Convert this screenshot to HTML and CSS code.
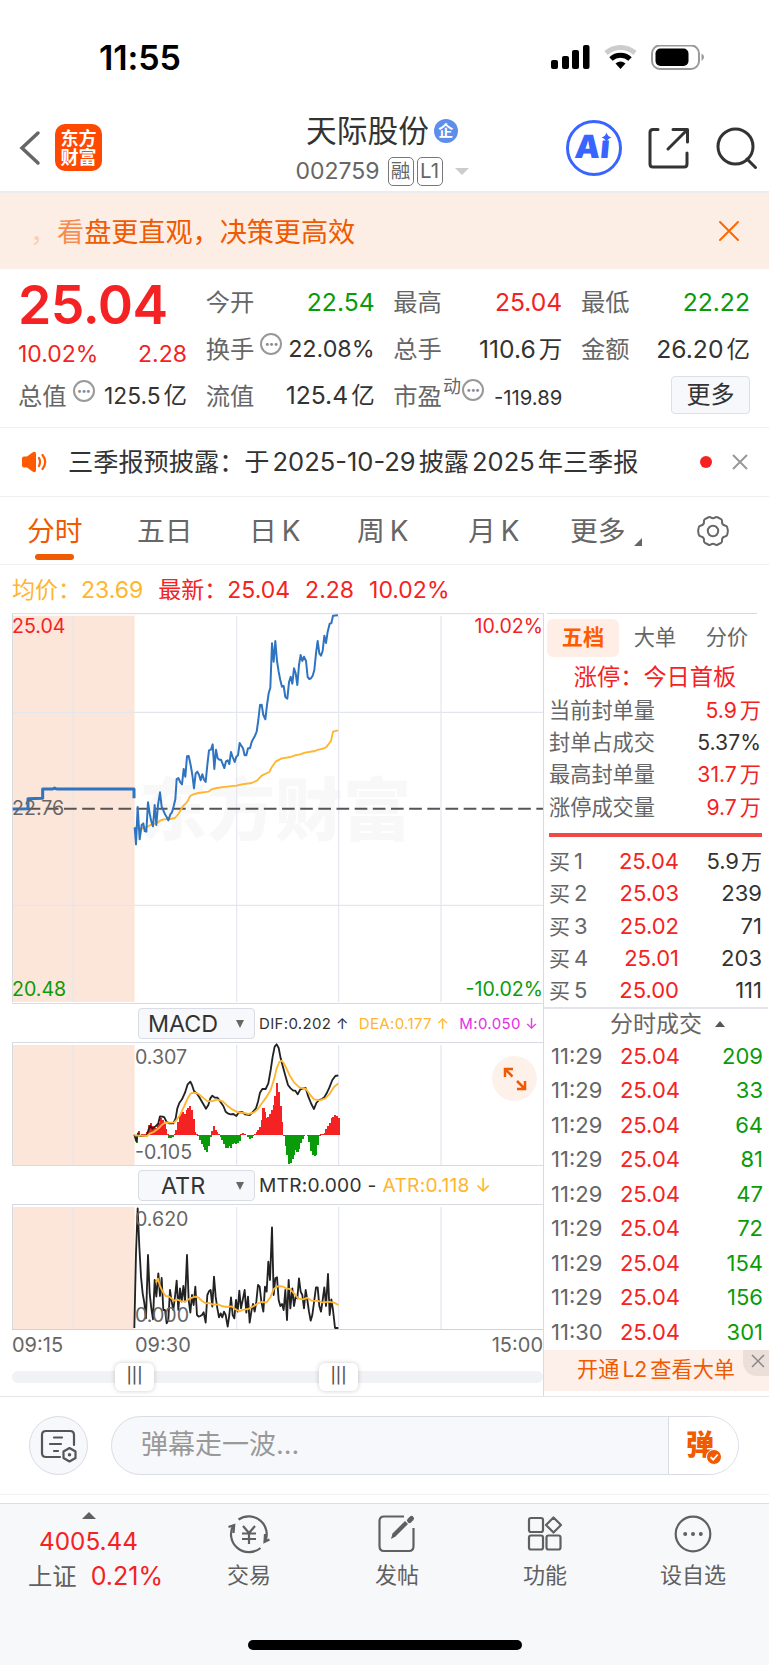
FILE: index.html
```html
<!DOCTYPE html>
<html lang="zh-CN">
<head>
    <meta charset="UTF-8">
    <meta name="viewport" content="width=device-width, initial-scale=1.0">
    <title>天际股份 002759</title>
    <link rel="stylesheet" href="styles.css">
</head>
<body>
    <div class="status-bar">
        <span class="clock">11:55</span>
        <svg class="status-icons" width="154" height="26" viewBox="0 0 154 26">
            <rect x="0" y="15" width="7" height="9" rx="2"/>
            <rect x="11" y="11" width="7" height="13" rx="2"/>
            <rect x="21" y="5" width="7" height="19" rx="2"/>
            <rect x="32" y="0" width="6.500" height="24" rx="2"/>
            <path d="M55 8 A22 22 0 0 1 84 8" fill="none" stroke="#ccc" stroke-width="5"/>
            <path d="M60 14 A14 14 0 0 1 79 14" fill="none" stroke="#000" stroke-width="5"/>
            <path d="M69.500 24 L64.500 18.500 A8 8 0 0 1 74.500 18.500 Z"/>
            <rect x="101" y="0.500" width="47" height="23.500" rx="8" fill="none" stroke="#999" stroke-width="2"/>
            <rect x="104.500" y="3.500" width="33" height="17.500" rx="5"/>
            <path d="M150.500 8.500 Q153 9.500 153 12 T150.500 16 Z" fill="#999"/>
        </svg>
    </div>

    <header class="header">
        <svg class="back" width="22" height="36" viewBox="0 0 22 36"><path d="M19 3 L3 18 L19 33" fill="none" stroke="#666" stroke-width="3.500" stroke-linecap="round"/></svg>
        <div class="logo"><span>东方</span><span>财富</span></div>
        <div class="stock">
            <div class="stock-name">天际股份<span class="ent">企</span></div>
            <div class="stock-code">002759<span class="tag">融</span><span class="tag">L1</span><i class="caret"></i></div>
        </div>
        <div class="ai">
            <svg width="58" height="58" viewBox="0 0 58 58">
                <circle cx="29" cy="29" r="26.500" fill="none" stroke="#3865ff" stroke-width="3"/>
                <path d="M41.500 13.500 Q42.500 17.500 46.500 18.500 Q42.500 19.500 41.500 23.500 Q40.500 19.500 36.500 18.500 Q40.500 17.500 41.500 13.500Z" fill="#3865ff"/>
            </svg>
            <span>Aı</span>
        </div>
        <svg class="share" width="44" height="44" viewBox="0 0 44 44" fill="none" stroke="#333" stroke-width="3" stroke-linecap="round" stroke-linejoin="round">
            <path d="M11 3.500 H6 Q3 3.500 3 6.500 V38 Q3 41 6 41 H37 Q40 41 40 38 V27"/>
            <path d="M21 23 L40 4 M26 3.500 H40.500 V16"/>
        </svg>
        <svg class="search" width="44" height="44" viewBox="0 0 44 44" fill="none" stroke="#333" stroke-width="3" stroke-linecap="round">
            <circle cx="20.500" cy="20.500" r="17.500"/><path d="M32 33 L40.500 41.500"/>
        </svg>
    </header>

    <div class="banner">
        <div class="banner-text"><span class="f1">，</span><span class="f2">看</span>盘更直观，决策更高效</div>
        <svg width="22" height="22" viewBox="0 0 22 22"><path d="M2 2 L20 20 M20 2 L2 20" stroke="#f60" stroke-width="2" stroke-linecap="round"/></svg>
    </div>

    <section class="quote">
        <div class="col first">
            <div class="price">25.04</div>
            <div class="row change red"><span>10.02%</span><span>2.28</span></div>
            <div class="row"><label>总值</label><i class="dots">•••</i><b class="mid">125.5<u>亿</u></b></div>
        </div>
        <div class="col">
            <div class="row"><label>今开</label><b class="green">22.54</b></div>
            <div class="row"><label>换手</label><i class="dots">•••</i><b class="pct">22.08%</b></div>
            <div class="row"><label>流值</label><b>125.4<u>亿</u></b></div>
        </div>
        <div class="col">
            <div class="row"><label>最高</label><b class="red">25.04</b></div>
            <div class="row"><label>总手</label><b>110.6<u>万</u></b></div>
            <div class="row"><label>市盈</label><sup>动</sup><i class="dots">•••</i><b class="small">-119.89</b></div>
        </div>
        <div class="col">
            <div class="row"><label>最低</label><b class="green">22.22</b></div>
            <div class="row"><label>金额</label><b>26.20<u>亿</u></b></div>
            <div class="row end"><button class="more">更多</button></div>
        </div>
    </section>

    <div class="notice">
        <svg width="28" height="22" viewBox="0 0 28 22">
            <path d="M3 5.500 H6 L11.500 1.500 Q15 -0.500 15 3 V19 Q15 22.500 11.500 20.500 L6 16.500 H3 Q1 16.500 1 14.500 V7.500 Q1 5.500 3 5.500Z" fill="#ff5a00"/>
            <path d="M18 7 Q20 11 18 15 M21.500 4 Q27 11 21.500 18" fill="none" stroke="#ff5a00" stroke-width="2.200" stroke-linecap="round"/>
        </svg>
        <span class="notice-text">三季报预披露：于<em>2025-10-29</em>披露<em>2025</em>年三季报</span>
        <i class="dot"></i>
        <svg width="16" height="16" viewBox="0 0 16 16"><path d="M1 1 L15 15 M15 1 L1 15" stroke="#999" stroke-width="2"/></svg>
    </div>

    <nav class="tabs">
        <span class="active">分时</span>
        <span>五日</span>
        <span>日<em>K</em></span>
        <span>周<em>K</em></span>
        <span>月<em>K</em></span>
        <span class="tab-more">更多</span>
        <svg width="34" height="32" viewBox="0 0 34 32" fill="none" stroke="#666" stroke-width="2">
            <path d="M12 2.500 Q14 1.500 15 2.700 Q17 4 19 2.700 Q20 1.500 22 2.500 L25 4 Q26.500 5 26 7 Q26 10 29 10.500 Q31 11 31.300 12.500 Q32.500 16 31.300 19.500 Q31 21 29 21.500 Q26 22 26 25 Q26.500 27 25 28 L22 29.500 Q20 30.500 19 29.300 Q17 28 15 29.300 Q14 30.500 12 29.500 L9 28 Q7.500 27 8 25 Q8 22 5 21.500 Q3 21 2.700 19.500 Q1.500 16 2.700 12.500 Q3 11 5 10.500 Q8 10 8 7 Q7.500 5 9 4 Z"/>
            <circle cx="17" cy="16" r="5.200"/>
        </svg>
    </nav>

    <div class="main">
        <div class="legend"><span class="orange">均价：23.69</span><span class="red">最新：25.04</span><span class="red">2.28</span><span class="red">10.02%</span></div>

        <div class="charts">
            <div class="price-chart">
                <span class="watermark">东方财富</span>
                <svg width="531" height="391" viewBox="36 24 1593 1173">
                    <rect x="38" y="32" width="366" height="1159" fill="#fce6da"/>
                    <path class="grid" d="M219 32 V1191 M710 32 V1191 M1016 32 V1191 M1323 32 V1191 M36 322 H1629 M36 901 H1629"/>
                    <path class="frame" d="M36 26 H1629 M37.500 26 V1191 M36 1195.500 H1629"/>
                    <path d="M83 611 H1629" stroke="#555" stroke-width="6" stroke-dasharray="38 16.500"/>
                    <polyline class="avg" points="404,667 420,672 440,666 455,658 470,655 480,647 490,643 510,642 525,639 535,627 548,605 562,590 570,574 580,568 595,564 625,560 635,553 650,549 680,545 710,542 725,538 755,534 772,526 785,512 808,501 815,487 828,469 845,460 872,456 885,451 900,448 915,443 945,438 955,434 970,431 980,425 993,408 999,380 1014,376"/>
                    <polyline class="line thick" points="38,612 84,611 84,581 128,580 128,552 158,552 164,549 170,552 402,552 402,580"/>
                    <polyline class="line" points="404,667 408,718 413,606 419,703 425,660 430,655 434,678 439,680 444,592 449,625 454,650 459,664 464,600 469,660 474,600 480,562 485,605 490,616 495,628 500,636 505,646 511,628 516,622 521,604 526,583 530,522 535,519 541,532 546,538 551,492 556,515 561,454 566,453 572,480 577,510 582,550 587,505 592,500 597,509 602,526 607,508 612,524 617,531 622,480 627,436 633,434 638,418 643,492 648,434 653,460 658,464 663,464 668,477 673,489 678,469 683,466 688,477 693,441 698,456 704,471 709,455 714,451 719,414 724,422 729,430 734,451 739,451 744,430 750,430 755,411 760,401 765,392 770,380 775,345 780,300 785,299 790,330 796,343 801,300 806,265 811,248 816,115 821,170 826,108 831,168 836,200 841,226 846,245 851,243 856,276 862,281 867,232 872,215 877,236 882,190 887,205 892,240 897,180 902,150 907,168 912,155 918,168 923,216 928,222 933,220 938,212 943,195 948,145 953,108 958,145 963,152 968,138 973,92 978,114 983,80 989,56 994,55 999,32 1014,31"/>
                </svg>
                <span class="lbl tl red">25.04</span>
                <span class="lbl tr red">10.02%</span>
                <span class="lbl ml">22.76</span>
                <span class="lbl bl green">20.48</span>
                <span class="lbl br green">-10.02%</span>
            </div>

            <div class="ind-bar">
                <div class="select">MACD<i></i></div>
                <div class="ind-values small"><span>DIF:0.202 ↑</span><span class="orange">DEA:0.177 ↑</span><span class="magenta">M:0.050 ↓</span></div>
            </div>
            <div class="sub-chart macd">
                <svg width="531" height="124" viewBox="-324 126 1593 372">
                    <rect x="-322" y="135" width="366" height="363" fill="#fce6da"/>
                    <path class="grid" d="M-141 135 V498 M350 135 V498 M656 135 V498 M963 135 V498"/>
                    <path class="frame" d="M-324 127.500 H1269 M-322.500 127 V498 M-324 496.500 H1269"/>
                    <g id="bars"></g>
                    <polyline class="dif" points="43,404 49,424 54,400 60,408 80,408 86,388 91,378 97,386 107,379 115,370 120,349 128,350 133,352 140,366 148,370 160,370 167,355 172,325 178,309 186,298 195,278 203,253 211,245 216,255 222,273 230,280 238,292 248,309 258,326 265,315 271,295 277,287 284,293 292,293 301,305 310,318 317,335 325,341 332,343 340,342 349,348 357,337 367,336 375,343 390,345 400,334 408,325 414,305 420,278 427,267 437,267 445,250 452,210 458,170 464,140 470,133 476,144 482,175 490,205 497,230 504,255 512,265 520,272 526,272 533,283 541,268 550,265 557,264 565,290 574,312 582,327 589,309 597,300 606,297 613,292 620,280 628,263 637,240 646,228 655,226"/>
                    <polyline class="avg" points="43,406 80,408 91,400 101,396 116,385 125,375 137,367 150,368 163,367 171,358 180,345 192,320 203,295 213,280 225,278 236,282 248,292 262,304 278,303 292,299 308,304 322,317 338,329 354,337 368,338 385,342 402,337 413,328 424,312 438,293 452,270 463,235 470,205 478,186 484,182 490,187 500,207 510,228 522,247 538,262 558,267 570,284 582,298 600,301 616,295 630,280 642,261 655,250"/>
                </svg>
                <span class="lbl t">0.307</span>
                <span class="lbl b">-0.105</span>
                <span class="expand"><svg width="24" height="24" viewBox="0 0 24 24" fill="none" stroke="#f05a00" stroke-width="2.500"><path d="M2 10 V2 H10 M2 2 L9.500 9.500 M22 14 V22 H14 M22 22 L14 14"/></svg></span>
            </div>

            <div class="ind-bar">
                <div class="select atr">ATR<i></i></div>
                <div class="ind-values"><span>MTR:0.000 -</span><span class="orange">ATR:0.118 ↓</span></div>
            </div>
            <div class="sub-chart atr">
                <svg width="531" height="125" viewBox="-324 612 1593 375">
                    <rect x="-322" y="621" width="366" height="369" fill="#fce6da"/>
                    <path class="grid" d="M-141 621 V987 M350 621 V987 M656 621 V987 M963 621 V987"/>
                    <path class="frame" d="M-324 613.500 H1269 M-322.500 614 V987"/>
                    <polyline class="dif" points="43,984 48,760 53,625 58,740 63,830 68,880 73,909 78,955 84,765 89,880 94,925 99,958 104,840 109,890 115,820 120,888 125,834 130,930 135,930 140,970 145,960 150,870 155,905 160,930 165,890 170,842 175,930 180,865 185,905 190,858 195,905 201,765 206,900 211,938 216,885 221,915 226,860 231,945 236,950 241,948 246,945 251,937 257,968 262,885 267,874 272,870 277,920 282,830 287,890 292,925 297,952 302,940 307,952 312,935 317,945 323,980 328,945 333,892 338,945 343,955 348,900 353,935 358,872 363,925 369,896 374,870 379,938 384,890 389,968 394,935 399,912 404,935 409,905 414,855 419,860 424,905 430,935 435,860 440,875 445,785 450,840 456,682 461,885 466,835 471,832 476,900 481,918 486,912 491,930 496,870 501,960 506,840 511,925 517,865 522,918 527,890 532,895 537,835 542,875 547,885 552,925 557,870 562,900 567,935 572,962 577,945 583,900 588,862 593,862 598,918 603,935 608,900 613,862 618,918 624,822 629,945 634,898 639,930 645,984 655,984"/>
                    <polyline class="avg" points="108,848 114,836 120,858 128,875 137,888 148,890 162,902 172,899 185,904 197,904 211,895 225,890 236,893 246,903 258,910 268,909 280,914 295,913 305,918 320,921 335,919 345,927 358,934 370,929 384,927 398,920 412,911 424,906 440,907 452,890 462,866 475,858 490,860 500,866 510,867 522,880 535,896 550,898 562,893 575,902 595,903 610,908 625,905 642,908 655,915"/>
                </svg>
                <span class="lbl t">0.620</span>
                <span class="lbl b">0.000</span>
            </div>

            <div class="times"><span>09:15</span><span>09:30</span><span>15:00</span></div>
            <div class="slider"><i class="handle h1">|||</i><i class="handle h2">|||</i></div>
        </div>

        <aside class="side">
            <div class="side-tabs"><span class="on">五档</span><span>大单</span><span>分价</span></div>
            <div class="limit red">涨停：今日首板</div>
            <div class="stats">
                <div><span>当前封单量</span><b class="red">5.9<u>万</u></b></div>
                <div><span>封单占成交</span><b>5.37%</b></div>
                <div><span>最高封单量</span><b class="red">31.7<u>万</u></b></div>
                <div><span>涨停成交量</span><b class="red">9.7<u>万</u></b></div>
            </div>
            <div class="bar"></div>
            <div class="buys">
                <div><span>买<em>1</em></span><b class="red">25.04</b><b>5.9<u>万</u></b></div>
                <div><span>买<em>2</em></span><b class="red">25.03</b><b>239</b></div>
                <div><span>买<em>3</em></span><b class="red">25.02</b><b>71</b></div>
                <div><span>买<em>4</em></span><b class="red">25.01</b><b>203</b></div>
                <div><span>买<em>5</em></span><b class="red">25.00</b><b>111</b></div>
            </div>
            <div class="deals-title">分时成交<i></i></div>
            <div class="deals">
                <div><span>11:29</span><b class="red">25.04</b><b class="green">209</b></div>
                <div><span>11:29</span><b class="red">25.04</b><b class="green">33</b></div>
                <div><span>11:29</span><b class="red">25.04</b><b class="green">64</b></div>
                <div><span>11:29</span><b class="red">25.04</b><b class="green">81</b></div>
                <div><span>11:29</span><b class="red">25.04</b><b class="green">47</b></div>
                <div><span>11:29</span><b class="red">25.04</b><b class="green">72</b></div>
                <div><span>11:29</span><b class="red">25.04</b><b class="green">154</b></div>
                <div><span>11:29</span><b class="red">25.04</b><b class="green">156</b></div>
                <div><span>11:30</span><b class="red">25.04</b><b class="green">301</b></div>
            </div>
            <div class="promo">开通<em>L2</em>查看大单
                <span class="promo-close"><svg width="14" height="14" viewBox="0 0 14 14"><path d="M1 1 L13 13 M13 1 L1 13" stroke="#888" stroke-width="1.500"/></svg></span>
            </div>
        </aside>
    </div>

    <div class="comment">
        <div class="round">
            <svg width="38" height="34" viewBox="0 0 38 34" fill="none" stroke="#555" stroke-width="2.200" stroke-linecap="round">
                <path d="M20 28 H6 Q2 28 2 24 V6 Q2 2 6 2 H30 Q34 2 34 6 V16"/>
                <path d="M14 8.500 H22 M10 15 H21 M14 22 H18"/>
                <path d="M29.500 19 L35.500 22.500 V29 L29.500 32.500 L23.500 29 V22.500 Z" stroke-linejoin="round"/>
                <circle cx="29.500" cy="25.700" r="1" fill="#555" stroke-width="1.500"/>
            </svg>
        </div>
        <div class="input">
            <span>弹幕走一波...</span>
            <div class="send">弹<svg width="16" height="16" viewBox="0 0 16 16"><circle cx="8" cy="8" r="7.500" fill="#f05a00" stroke="#fff"/><path d="M4.500 8 L7.200 10.700 L11.800 5.500" fill="none" stroke="#fff" stroke-width="1.800"/></svg></div>
        </div>
    </div>

    <footer class="bottom">
        <div class="items">
            <div class="index">
                <i></i>
                <span class="red">4005.44</span>
                <span>上证<b class="red">0.21%</b></span>
            </div>
            <div class="item">
                <svg width="44" height="40" viewBox="0 0 44 40" fill="none" stroke="#606060" stroke-width="2.200">
                    <path d="M11.500 5.500 A18 18 0 0 1 38 28 M33.500 34 A18 18 0 0 1 6.500 11 M1.500 13 L7.200 11 L6.500 19 M42.500 25.500 L37.500 28 L38 20"/>
                    <path d="M16 12 L22 19 L28 12 M22 19 V30 M15 19.500 H29 M15 25 H29"/>
                </svg>
                <span>交易</span>
            </div>
            <div class="item">
                <svg width="40" height="40" viewBox="0 0 40 40" fill="none" stroke="#606060" stroke-width="2.200">
                    <path d="M27 2.500 H7 Q2.500 2.500 2.500 7 V32 Q2.500 37 7 37 H32 Q36.500 37 36.500 32 V14"/>
                    <path d="M14 25 L15.500 19.500 L28 7 L31 10 L18.500 22.500 Z" fill="#606060" stroke="none"/>
                    <path d="M32.500 6.500 L34.500 4.500" stroke-width="5" stroke-linecap="round"/>
                </svg>
                <span>发帖</span>
            </div>
            <div class="item">
                <svg width="40" height="40" viewBox="0 0 40 40" fill="none" stroke="#606060" stroke-width="2.200" stroke-linejoin="round">
                    <rect x="4" y="4" width="14" height="14" rx="2"/>
                    <rect x="4" y="21.500" width="14" height="14" rx="2"/>
                    <rect x="21.500" y="21.500" width="14" height="14" rx="2"/>
                    <path d="M28.500 3.500 L36 11 L28.500 18.500 L21 11 Z"/>
                </svg>
                <span>功能</span>
            </div>
            <div class="item">
                <svg width="40" height="40" viewBox="0 0 40 40" fill="#606060">
                    <circle cx="20" cy="20" r="17.300" fill="none" stroke="#606060" stroke-width="2.200"/>
                    <circle cx="12.200" cy="20" r="2"/><circle cx="20" cy="20" r="2"/><circle cx="27.800" cy="20" r="2"/>
                </svg>
                <span>设自选</span>
            </div>
        </div>
        <div class="home"></div>
    </footer>

    <script>
        // MACD histogram, one bar per minute from 09:30
        const hist = [-5, -24, 12, 0, 2, 3, 2, 10, 30, 36, 28, 22, 22, 30, 36, 50, 46, 34, 18, 4,
            -8, -8, -6, 2, 14, 40, 60, 66, 68, 64, 76, 82, 88, 76, 48, 8, 2, -4, -16, -28,
            -36, -44, -52, -34, -6, 12, 28, 16, 8, 2, -6, -16, -26, -38, -38, -34, -38, -26, -24, -26,
            -24, -18, 2, 6, 4, 0, -6, -12, -8, -4, 2, 10, 16, 24, 46, 80, 68, 52, 54, 62,
            74, 90, 116, 156, 128, 88, 40, -2, -32, -60, -86, -84, -72, -60, -46, -50, -42, -24, -12, -2,
            0, -4, -22, -48, -60, -64, -60, -30, -2, 2, 2, 6, 18, 26, 36, 50, 54, 60, 58, 50];
        const zero = 405;
        const bars = document.getElementById('bars');

        hist.forEach((v, i) => {
            const r = document.createElementNS('http://www.w3.org/2000/svg', 'rect');
            r.setAttribute('x', 43 + i * 5.12);
            r.setAttribute('y', v > 0 ? zero - v : zero);
            r.setAttribute('width', 6.5);
            r.setAttribute('height', Math.abs(v));
            r.setAttribute('fill', v > 0 ? '#f42222' : '#0a9b0a');
            bars.appendChild(r);
        });
    </script>
</body>
</html>
```
FILE: styles.css
```css
* {
    box-sizing: border-box;
}

body {
    margin: 0;
    width: 769px;
    height: 1665px;
    overflow: hidden;
    background: #fff;
    color: #333;
    font-family: Inter, "Noto Sans CJK SC", sans-serif;
    font-size: 24px;
    line-height: 1;
}

b, i, em, u {
    font-weight: normal;
    font-style: normal;
    text-decoration: none;
}

svg {
    display: block;
    flex: none;
}

u {
    margin-left: 3px;
}

.red { color: #f42222 !important; }
.green { color: #0a9b0a !important; }
.orange { color: #ffb52e; }
.magenta { color: #e52ee5; }

/* status bar */
.status-bar {
    height: 104px;
    padding: 12px 64px 0 99px;
    display: flex;
    justify-content: space-between;
    align-items: center;
}

.clock {
    font-size: 34px;
    font-weight: 600;
    letter-spacing: -0.1px;
    color: #000;
}

/* header */
.header {
    height: 89px;
    border-bottom: 2px solid #ececee;
    display: flex;
    align-items: center;
    padding: 0 10px 0 19px;
}

.logo {
    margin-left: 14px;
    width: 47px;
    height: 47px;
    border-radius: 10px;
    background: #ff4800;
    color: #fff;
    font-size: 18px;
    font-weight: 700;
    line-height: 19px;
    display: flex;
    flex-direction: column;
    align-items: center;
    justify-content: center;
}

.stock {
    flex: 1;
    padding-left: 97px;
    display: flex;
    flex-direction: column;
    align-items: center;
}

.stock-name {
    font-size: 30.700px;
    line-height: 42px;
    display: flex;
    align-items: center;
    margin-top: 5px;
}

.ent {
    width: 24px;
    height: 24px;
    margin-left: 5px;
    border-radius: 50%;
    background: #5f8eea;
    color: #fff;
    font-size: 15px;
    font-weight: 700;
    line-height: 23px;
    text-align: center;
}

.stock-code {
    height: 38px;
    font-size: 23px;
    color: #666;
    display: flex;
    align-items: center;
}

.tag {
    height: 29px;
    min-width: 26px;
    margin-left: 3px;
    padding: 0 2px;
    border: 1.500px solid #777;
    border-radius: 5px;
    font-size: 20.500px;
    line-height: 26px;
    text-align: center;
}

.tag:first-of-type {
    margin-left: 8px;
    font-size: 19.500px;
}

.caret {
    margin-left: 12px;
    border: 7px solid transparent;
    border-top-color: #ccc;
    border-bottom: 0;
}

.ai {
    position: relative;
    margin-right: 24px;
}

.ai span {
    position: absolute;
    left: 10px;
    top: 12px;
    font-size: 32px;
    font-weight: 900;
    color: #3865ff;
    transform: skewX(-5deg);
}

.share {
    margin-right: 24px;
}

/* banner */
.banner {
    height: 76px;
    padding: 3px 29px 0 30px;
    background: #fdeee5;
    color: #f05a00;
    display: flex;
    align-items: center;
    justify-content: space-between;
}

.banner-text {
    font-size: 27.100px;
    line-height: 40px;
}

.banner svg {
    margin-top: -3px;
}

.f1 { opacity: 0.2; }
.f2 { opacity: 0.65; }

/* quote */
.quote {
    height: 159px;
    padding: 10px 19px 0 18px;
    border-bottom: 1px solid #f0f0f2;
    display: grid;
    grid-template-columns: repeat(4, 169px);
    justify-content: space-between;
}

.row {
    height: 46.700px;
    display: flex;
    align-items: center;
    color: #333;
}

.row label {
    color: #666;
    margin-right: 6px;
    font-size: 24.300px;
}

.row b {
    margin-left: auto;
    font-size: 24.700px;
}

.row u {
    font-size: 23.500px;
}

.row .pct {
    font-size: 23.300px;
}

.row .small {
    font-size: 20.300px;
    padding-top: 4px;
}

.row .mid {
    font-size: 22.800px;
}

.row sup {
    font-size: 18px;
    margin: -18px 1px 0 -5px;
    color: #666;
}

.row.end {
    justify-content: flex-end;
}

.row .more {
    margin-top: -2px;
}

.price {
    height: 53px;
    font-size: 53.500px;
    line-height: 51px;
    font-weight: 600;
    letter-spacing: -0.5px;
    color: #f42222;
}

.change {
    height: 41px;
    padding-top: 4px;
    justify-content: space-between;
    font-size: 23px;
}

.dots {
    flex: none;
    width: 22px;
    height: 22px;
    margin-top: -11px;
    border: 2px solid #999;
    border-radius: 50%;
    color: #888;
    font-size: 9px;
    line-height: 18px;
    text-align: center;
    letter-spacing: -0.700px;
}

.more {
    width: 79px;
    height: 38px;
    padding: 0;
    border: 1px solid #dcdfe6;
    border-radius: 4px;
    background: #f7f8fb;
    color: #333;
    font: inherit;
}

/* notice */
.notice {
    height: 69px;
    padding: 0 21px 0 21px;
    border-bottom: 1px solid #f0f0f2;
    display: flex;
    align-items: center;
}

.notice-text {
    flex: 1;
    margin-left: 19px;
    font-size: 25.200px;
    white-space: nowrap;
}

.notice em {
    margin: 0 3px;
    font-size: 25.500px;
}

.dot {
    width: 12px;
    height: 12px;
    margin-right: 20px;
    border-radius: 50%;
    background: #f42222;
}

/* tabs */
.tabs {
    height: 68px;
    padding-left: 27px;
    border-bottom: 1px solid #f0f0f2;
    display: grid;
    grid-template-columns: 110px 112px 108px 111px 102px 126px 34px;
    align-items: center;
    font-size: 27.800px;
    line-height: 66px;
    color: #666;
}

.tabs em {
    margin-left: 5px;
}

.tabs .active {
    color: #f05a00;
    position: relative;
}

.active::after {
    content: "";
    position: absolute;
    left: 8px;
    bottom: 4px;
    width: 39px;
    height: 6px;
    border-radius: 3px;
    background: #f05a00;
}

.tab-more {
    display: flex;
    align-items: center;
}

.tab-more::after {
    content: "";
    margin: 22px 0 0 8px;
    border: 4px solid #666;
    border-top-color: transparent;
    border-left-color: transparent;
}

/* chart area */
.main {
    height: 832px;
    border-bottom: 1px solid #e6e6ea;
    display: grid;
    grid-template: 48px 783px / 543px 226px;
}

.legend {
    grid-column: 1 / 3;
    padding-left: 12px;
    line-height: 50px;
    font-size: 23px;
    display: flex;
    gap: 15px;
}

.charts {
    padding-left: 12px;
    display: flex;
    flex-direction: column;
}

.price-chart, .sub-chart {
    position: relative;
}

.watermark {
    position: absolute;
    left: 127px;
    top: 157px;
    font-size: 68px;
    font-weight: 900;
    line-height: 80px;
    color: #f8f8f8;
}

.price-chart svg, .sub-chart svg {
    position: relative;
}

.grid, .frame {
    fill: none;
    stroke: #e3e6ee;
    stroke-width: 3.500;
}

.frame {
    stroke: #d8dae2;
    stroke-width: 3;
}

.avg, .line, .dif {
    fill: none;
    stroke: #ffb52e;
    stroke-width: 5.500;
    stroke-linejoin: round;
}

.line {
    stroke: #2f74c0;
    stroke-width: 6;
}

.line.thick {
    stroke-width: 9;
}

.dif {
    stroke: #222;
}

#bars {
    shape-rendering: crispEdges;
}

.lbl {
    position: absolute;
    font-size: 19.600px;
    color: #666;
}

.tl { left: 0; top: 4px; }
.tr { right: 0; top: 4px; }
.ml { left: 0; top: 186px; }
.bl { left: 0; bottom: 4px; }
.br { right: 0; bottom: 4px; }
.t { left: 123px; top: 6px; }
.b { left: 123px; bottom: 3px; }

.ind-bar {
    height: 38px;
    padding: 1px 0 0 126px;
    display: flex;
    align-items: center;
}

.select {
    width: 117px;
    height: 31px;
    margin-right: 4px;
    padding: 0 10px 0 9px;
    border: 1px solid #d9dce4;
    border-radius: 4px;
    background: #f7f8fb;
    display: flex;
    align-items: center;
    justify-content: space-between;
    font-size: 23.300px;
}

.select.atr {
    padding-left: 22px;
}

.select i {
    border: 4.500px solid transparent;
    border-top: 8px solid #666;
    border-bottom: 0;
}

.ind-values {
    display: flex;
    gap: 6px;
    font-size: 19.200px;
    letter-spacing: 0.25px;
    white-space: nowrap;
}

.ind-values.small {
    gap: 10px;
    font-size: 15px;
    letter-spacing: 0.35px;
}

.expand {
    position: absolute;
    right: 6px;
    top: 14px;
    width: 45px;
    height: 45px;
    border-radius: 50%;
    background: #fdf1ea;
    display: flex;
    align-items: center;
    justify-content: center;
}

.times {
    height: 34px;
    border-top: 1px solid #d0d2da;
    font-size: 20px;
    line-height: 31px;
    color: #666;
    display: grid;
    grid-template-columns: 123px 1fr auto;
}

.slider {
    position: relative;
    height: 12px;
    margin-top: 8px;
    border-radius: 6px;
    background: #f1f2f5;
}

.handle {
    position: absolute;
    top: -8px;
    width: 39px;
    height: 28px;
    border-radius: 6px;
    background: #fff;
    box-shadow: 0 0 5px rgba(0, 0, 0, 0.2);
    color: #555;
    font-size: 15.500px;
    font-weight: 500;
    line-height: 25px;
    text-align: center;
}

.h1 { left: 103px; }
.h2 { left: 307px; }

/* order book */
.side {
    border-left: 1px solid #d8dae2;
    padding-left: 3px;
    font-size: 21.200px;
    color: #666;
}

.side-tabs {
    width: 210px;
    height: 44px;
    padding-top: 5px;
    border-top: 1px solid #d8dae2;
    display: grid;
    grid-template-columns: 72px 72px 72px;
    line-height: 37px;
    text-align: center;
}

.side-tabs .on {
    height: 38px;
    border-radius: 6px;
    background: #ffeee6;
    color: #ff5a00;
    font-weight: 700;
}

.limit {
    height: 37px;
    font-size: 23.200px;
    line-height: 41px;
    text-align: center;
    padding-right: 6px;
}

.side b {
    color: #333;
    text-align: right;
}

.stats div {
    height: 32.400px;
    padding: 0 8px 0 2px;
    display: flex;
    align-items: center;
    justify-content: space-between;
}

.bar {
    height: 4px;
    margin: 9px 7px 8px 2px;
    background: #ee4a4a;
}

.buys, .deals {
    font-size: 22px;
}

.buys div, .deals div {
    height: 32.400px;
    padding: 0 7px 0 2px;
    display: grid;
    grid-template-columns: 56px 74px 1fr;
    align-items: center;
}

.buys span {
    font-size: 21px;
}

.buys em {
    margin-left: 4px;
    font-size: 22px;
}

.buys u {
    margin-left: 2px;
    font-size: 21px;
}

.deals-title {
    height: 33px;
    margin: 0 1px 0 -3px;
    padding-left: 23px;
    border-top: 2px solid #e2e4ea;
    font-size: 23px;
    display: flex;
    align-items: center;
    justify-content: center;
}

.deals-title i {
    margin-left: 13px;
    border: 5px solid transparent;
    border-bottom: 6px solid #555;
    border-top: 0;
}

.deals div {
    height: 34.500px;
    padding: 0 6px 2px 4px;
    grid-template-columns: 55px 74px 1fr;
}

.promo {
    position: relative;
    height: 41px;
    margin-left: -3px;
    padding-left: 33px;
    background: #fdf0ea;
    color: #f05a00;
    font-size: 21.200px;
    line-height: 38px;
}

.promo em {
    margin: 0 3px;
}

.promo-close {
    position: absolute;
    right: 0;
    top: 0;
    width: 26px;
    height: 26px;
    padding: 4px 0 0 8px;
    border-bottom-left-radius: 14px;
    background: #ecdfda;
}

/* comment box */
.comment {
    height: 98px;
    padding: 0 30px 0 29px;
    border-bottom: 1px solid #f0f0f2;
    display: flex;
    align-items: center;
    justify-content: space-between;
}

.round {
    width: 59px;
    height: 59px;
    border: 1px solid #d9dce4;
    border-radius: 50%;
    background: #f7f8fb;
    display: flex;
    align-items: center;
    justify-content: center;
}

.input {
    width: 628px;
    height: 59px;
    padding-left: 29px;
    border: 1px solid #d9dce4;
    border-radius: 30px;
    background: #f7f8fb;
    overflow: hidden;
    display: flex;
    justify-content: space-between;
    color: #999;
    font-size: 27px;
    line-height: 55px;
}

.send {
    position: relative;
    width: 70px;
    padding-left: 17px;
    border-left: 1px solid #d9dce4;
    background: #fff;
    color: #f05a00;
    font-size: 28px;
    font-weight: 900;
    line-height: 56px;
}

.send svg {
    position: absolute;
    left: 37px;
    top: 32px;
}

/* bottom navigation */
.bottom {
    height: 162px;
    margin-top: 8px;
    border-top: 1px solid #dcdee2;
    background: #f7f8fa;
}

.items {
    height: 136px;
    display: grid;
    grid-template-columns: 175px repeat(4, 148px);
    color: #606060;
}

.index, .item {
    display: flex;
    flex-direction: column;
    align-items: center;
}

.index {
    font-size: 24.300px;
    padding: 8px 0 0 2px;
    line-height: 35px;
}

.index i {
    border: 7px solid transparent;
    border-bottom-color: #606060;
    border-top: 0;
    margin-bottom: 5px;
}

.index span + span {
    padding-left: 14px;
}

.index b {
    margin-left: 14px;
    font-size: 25px;
}

.item {
    padding-top: 10px;
    font-size: 22px;
    line-height: 43px;
}

.home {
    width: 274px;
    height: 10px;
    margin: 0 auto;
    border-radius: 5px;
    background: #000;
}
```
